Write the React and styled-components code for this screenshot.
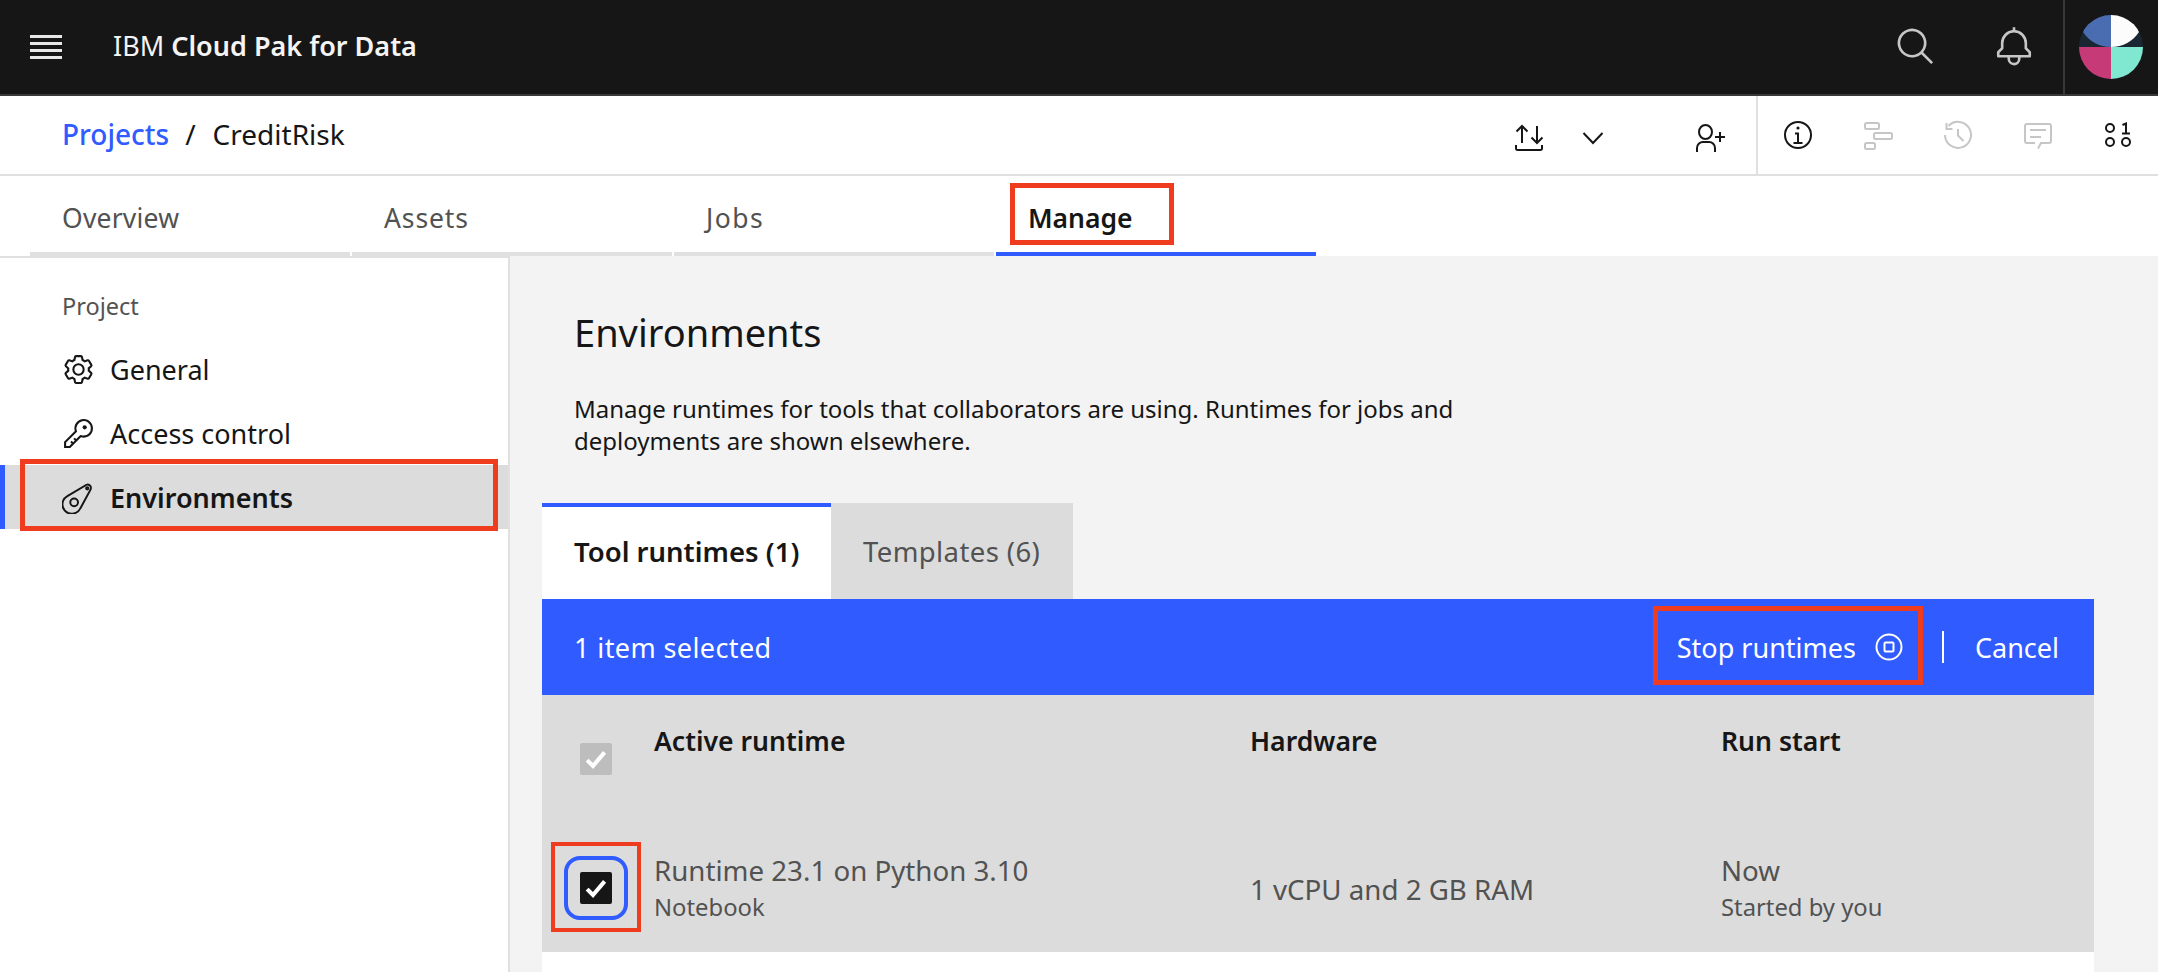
import React from 'react';
import styled, { createGlobalStyle } from 'styled-components';

const FONT = '"Noto Sans", "Open Sans", Arial, sans-serif';

const Global = createGlobalStyle`
  html, body { margin: 0; padding: 0; height: 100%; background: #fff; }
  body { font-family: ${FONT}; color: #161616; overflow: hidden; }
  #root { height: 100%; }
  * { box-sizing: border-box; }
`;

const Page = styled.div`
  width: 2158px; height: 972px; display: flex; flex-direction: column; overflow: hidden;
`;

/* top bar */
const TopBar = styled.header`
  height: 96px; flex: none; background: #161616; border-bottom: 2px solid #393939;
  display: flex; align-items: center; color: #f4f4f4;
`;
const Burger = styled.div`
  width: 32px; height: 24px; margin-left: 30px; display: flex; flex-direction: column; justify-content: space-between;
  & > i { display: block; height: 3px; background: #e8e8e8; }
`;
const Brand = styled.div`
  margin-left: 51px; font-size: 27px; letter-spacing: 0; line-height: 32px; white-space: nowrap; margin-top: -2px;
  & > b { font-weight: 600; }
`;
const TopIcons = styled.div`
  margin-left: auto; display: flex; align-items: center; height: 100%;
`;
const TopIconSlot = styled.div`
  width: 98px; height: 100%; display: flex; align-items: center; justify-content: center; color: #c6c6c6;
  svg { width: 42px; height: 42px; }
`;
const AvatarSlot = styled.div`
  width: 95px; height: 100%; margin-left: 0; border-left: 2px solid #393939;
  display: flex; align-items: center; padding-left: 14px;
  svg { width: 64px; height: 64px; display: block; }
`;

/* breadcrumb row */
const Crumbs = styled.div`
  height: 80px; flex: none; border-bottom: 2px solid #e0e0e0; display: flex; align-items: stretch; padding-left: 62px;
`;
const CrumbText = styled.div`
  display: flex; align-items: center; font-size: 28px; white-space: nowrap; margin-top: -2px;
`;
const CrumbLink = styled.span` color: #2f5bff; font-weight: 500; `;
const CrumbSep = styled.span` margin: 0 17px 0 16px; `;
const ToolSet = styled.div` margin-left: auto; display: flex; align-items: center; `;
const ToolButton = styled.div`
  width: ${p => p.$w || 80}px; height: 78px; display: flex; align-items: center; justify-content: center;
  margin-right: ${p => p.$gap || 0}px;
  color: ${p => p.$off ? '#c6c6c6' : '#161616'};
  svg { width: 32px; height: 32px; overflow: visible; }
`;
const ToolDivider = styled.div` width: 2px; height: 78px; background: #e0e0e0; `;

/* tabs */
const TabRow = styled.nav`
  height: 80px; flex: none; display: flex; gap: 2px; padding-left: 30px;
`;
const PageTab = styled.div`
  position: relative; width: 320px; height: 80px; border-bottom: 4px solid ${p => p.$active ? '#2f5bff' : '#e0e0e0'};
  padding: 24px 0 0 32px; font-size: 26.5px; line-height: 36px; letter-spacing: ${p => p.$ls || 0}px;
  color: ${p => p.$active ? '#161616' : '#525252'}; font-weight: ${p => p.$active ? 600 : 400};
`;

/* annotation boxes */
const Callout = styled.div`
  position: absolute; border: 5px solid #f03c1e; pointer-events: none;
`;
const ManageCallout = styled(Callout)` left: 14px; top: 7px; width: 164px; height: 62px; `;
const NavCallout = styled(Callout)` left: 15px; top: -6px; width: 478px; height: 72px; `;
const StopCallout = styled(Callout)` right: 171px; top: 7px; width: 270px; height: 79px; `;
const CheckCallout = styled(Callout)` left: -17px; top: -18px; width: 90px; height: 90px; border-width: 4px; `;

/* body */
const Body = styled.div` flex: 1; display: flex; min-height: 0; `;
const Side = styled.aside`
  width: 510px; flex: none; border-right: 2px solid #e0e0e0; border-top: 2px solid #e0e0e0; background: #fff; padding-top: 31px;
`;
const SideTitle = styled.div`
  padding-left: 62px; font-size: 23.5px; line-height: 34px; color: #525252; margin-bottom: 14px;
`;
const NavItem = styled.div`
  position: relative; height: 64px; display: flex; align-items: center; gap: 15px; padding-left: ${p => p.$active ? 57 : 62}px;
  background: ${p => p.$active ? '#dcdcdc' : 'transparent'}; border-left: ${p => p.$active ? '5px solid #2f5bff' : '0'};
  font-size: 27px; font-weight: ${p => p.$active ? 600 : 400};
  svg { width: 33px; height: 33px; flex: none; }
`;

const Main = styled.main`
  flex: 1; min-width: 0; background: #f3f3f3; padding: 58px 64px 0 32px; display: flex; flex-direction: column;
`;
const Title = styled.h1`
  margin: 0 0 43px 32px; font-size: 38px; font-weight: 400; line-height: 36px;
`;
const Lead = styled.p`
  margin: 0 0 47px 32px; width: 900px; font-size: 24px; line-height: 31.5px;
`;
const SubTabs = styled.div` display: flex; height: 96px; flex: none; `;
const SubTab = styled.div`
  width: ${p => p.$w}px; height: 96px; padding-left: 32px; padding-top: ${p => p.$active ? 27 : 31}px;
  background: ${p => p.$active ? '#fff' : '#dcdcdc'}; border-top: ${p => p.$active ? '4px solid #2f5bff' : '0'};
  font-size: 27.5px; line-height: 36px; font-weight: ${p => p.$active ? 600 : 400}; color: ${p => p.$active ? '#161616' : '#525252'};
  white-space: nowrap; letter-spacing: ${p => p.$ls || 0}px;
`;
const TablePanel = styled.section` flex: 1; background: #fff; `;
const ActionBar = styled.div`
  position: relative; height: 96px; background: #2f5bff; color: #fff; display: flex; align-items: center;
  padding: 0 35px 0 32px; font-size: 27px; white-space: nowrap;
`;
const ActionLabel = styled.div` margin-right: auto; letter-spacing: 0.4px; `;
const StopAction = styled.div`
  display: flex; align-items: center; gap: 19px;
  svg { width: 28px; height: 28px; display: block; }
`;
const BarDivider = styled.div` width: 2px; height: 32px; background: #fff; margin: 0 31px 0 39px; `;

const Row = styled.div`
  display: grid; grid-template-columns: 112px 596px 471px 1fr; background: #dcdcdc; height: ${p => p.$h}px;
`;
const CheckCell = styled.div`
  display: flex; align-items: ${p => p.$top ? 'flex-start' : 'center'}; padding-left: 38px; padding-top: ${p => p.$top ? 48 : 0}px;
`;
const HeadCell = styled.div`
  padding-top: 28px; font-size: 26.6px; line-height: 36px; font-weight: 600;
`;
const DataCell = styled.div`
  display: flex; flex-direction: column; justify-content: center; color: #525252; white-space: nowrap; padding-top: 2px;
`;
const DataMain = styled.div` font-size: 27.7px; line-height: 36px; `;
const DataSub = styled.div` font-size: 23.8px; line-height: 36px; margin-top: 1px; `;
const CheckBox = styled.div`
  width: 32px; height: 32px; border-radius: 2px; display: flex; align-items: center; justify-content: center;
  background: ${p => p.$dim ? '#bdbdbd' : '#161616'};
  svg { width: 30px; height: 30px; }
`;
const FocusRing = styled.div`
  position: relative; width: 64px; height: 64px; margin-left: -16px; border: 4px solid #2f5bff; border-radius: 16px;
  display: flex; align-items: center; justify-content: center;
`;

const Check = () => (
  <svg viewBox="0 0 22 22"><path d="M4.5 11.8l4.3 4.3 8.5-10" fill="none" stroke="#fff" strokeWidth="3" /></svg>
);

const I = {
  search: <svg viewBox="0 0 32 32" fill="currentColor"><path d="M29 27.5859l-7.5521-7.5521a11.0177 11.0177 0 1 0-1.4141 1.4141L27.5859 29ZM4 13a9 9 0 1 1 9 9A9.01 9.01 0 0 1 4 13Z" /></svg>,
  bell: <svg viewBox="0 0 32 32" fill="currentColor"><path d="M28.7071,19.293,26,16.5859V13a10.0136,10.0136,0,0,0-9-9.9492V1H15V3.0508A10.0136,10.0136,0,0,0,6,13v3.5859L3.2929,19.293A1,1,0,0,0,3,20v3a1,1,0,0,0,1,1h7v.7768a5.152,5.152,0,0,0,4.5,5.1987A5.0057,5.0057,0,0,0,21,25V24h7a1,1,0,0,0,1-1V20A1,1,0,0,0,28.7071,19.293ZM19,25a3,3,0,0,1-6,0V24h6Zm8-3H5V20.4141L7.707,17.707A1,1,0,0,0,8,17V13a8,8,0,0,1,16,0v4a1,1,0,0,0,.293.707L27,20.4141Z" /></svg>,
  transfer: <svg viewBox="0 0 32 32" fill="none" stroke="currentColor" strokeWidth="2"><path d="M3 26v3.5a1.5 1.5 0 0 0 1.5 1.5h23a1.5 1.5 0 0 0 1.5-1.5V26M9 24V7M3.5 12.5L9 7l5.5 5.5M24 7v17M18.5 18.5L24 24l5.5-5.5" /></svg>,
  chevron: <svg viewBox="0 0 32 32" fill="none" stroke="currentColor" strokeWidth="2"><path d="M6.5 14L16 24l9.5-10" /></svg>,
  addUser: <svg viewBox="0 0 32 32" fill="none" stroke="currentColor" strokeWidth="2"><ellipse cx="12.5" cy="13" rx="6.5" ry="7" /><path d="M4 33v-4a6 6 0 0 1 6-6h6a6 6 0 0 1 6 6v4M22 18h10M27 13v10" /></svg>,
  info: <svg viewBox="0 0 32 32" fill="none" stroke="currentColor" strokeWidth="2"><circle cx="16" cy="16" r="13" /><path d="M11.5 24h9M16 24v-9.5h-3" /><circle cx="16" cy="9" r="1.6" fill="currentColor" stroke="none" /></svg>,
  flow: <svg viewBox="0 0 32 32" fill="none" stroke="currentColor" strokeWidth="2"><rect x="3" y="4" width="14" height="6" rx="1.5" /><rect x="12" y="14" width="18" height="6" rx="1.5" /><rect x="3" y="24" width="10" height="6" rx="1.5" /></svg>,
  history: <svg viewBox="0 0 32 32" fill="none" stroke="currentColor" strokeWidth="2"><path d="M6.5 7A13 13 0 1 1 3 16M4.5 4v6h6M16 10v6.5l5.5 5.5" /></svg>,
  comment: <svg viewBox="0 0 32 32" fill="none" stroke="currentColor" strokeWidth="2"><path d="M16 29.5l3-5.5h8a2 2 0 0 0 2-2V7a2 2 0 0 0-2-2H5a2 2 0 0 0-2 2v15a2 2 0 0 0 2 2h8" /><path d="M8 11h16M8 18h11" /></svg>,
  binary: <svg viewBox="0 0 32 32" fill="none" stroke="currentColor" strokeWidth="2"><circle cx="8" cy="9" r="4" /><path d="M20.5 6L24 4.5V14.5M20 14.5h8" /><circle cx="8" cy="23" r="4" /><circle cx="24" cy="23" r="4" /></svg>,
  gear: <svg viewBox="0 0 32 32" fill="currentColor"><path d="M27,16.76c0-.25,0-.5,0-.76s0-.51,0-.77l1.92-1.68A2,2,0,0,0,29.3,11L26.94,7a2,2,0,0,0-1.73-1,2,2,0,0,0-.64.1l-2.43.82a11.35,11.35,0,0,0-1.31-.75l-.51-2.52a2,2,0,0,0-2-1.61H13.64a2,2,0,0,0-2,1.61l-.51,2.52a11.48,11.48,0,0,0-1.32.75L7.43,6.06A2,2,0,0,0,6.79,6,2,2,0,0,0,5.06,7L2.7,11a2,2,0,0,0,.41,2.51L5,15.24c0,.25,0,.5,0,.76s0,.51,0,.77L3.11,18.45A2,2,0,0,0,2.7,21L5.06,25a2,2,0,0,0,1.73,1,2,2,0,0,0,.64-.1l2.43-.82a11.35,11.35,0,0,0,1.31.75l.51,2.52a2,2,0,0,0,2,1.61h4.72a2,2,0,0,0,2-1.61l.51-2.52a11.48,11.48,0,0,0,1.32-.75l2.42.82a2,2,0,0,0,.64.1,2,2,0,0,0,1.73-1L29.3,21a2,2,0,0,0-.41-2.51ZM25.21,24l-3.43-1.16a8.86,8.86,0,0,1-2.71,1.57L18.36,28H13.64l-.71-3.55a9.36,9.36,0,0,1-2.7-1.57L6.79,24,4.43,20l2.72-2.4a8.9,8.9,0,0,1,0-3.13L4.43,12,6.79,8l3.43,1.16a8.86,8.86,0,0,1,2.71-1.57L13.64,4h4.72l.71,3.55a9.36,9.36,0,0,1,2.7,1.57L25.21,8,27.57,12l-2.72,2.4a8.9,8.9,0,0,1,0,3.13L27.57,20Z" /><path d="M16,22a6,6,0,1,1,6-6A5.94,5.94,0,0,1,16,22Zm0-10a3.91,3.91,0,0,0-4,4,3.91,3.91,0,0,0,4,4,3.91,3.91,0,0,0,4-4A3.91,3.91,0,0,0,16,12Z" /></svg>,
  key: <svg viewBox="0 0 32 32" fill="currentColor"><path d="M21,2a8.9977,8.9977,0,0,0-8.6119,11.6118L2,24v6H8L18.3881,19.6118A9,9,0,1,0,21,2Zm0,16a7.0125,7.0125,0,0,1-2.0322-.3022L17.821,17.35l-.8472.8472-3.1811,3.1812L12.4141,20,11,21.4141l1.3787,1.3786-1.5859,1.5859L9.4141,23,8,24.4141l1.3787,1.3786L7.1716,28H4V24.8284l9.8023-9.8023.8472-.8474-.3473-1.1467A7,7,0,1,1,21,18Z" /><circle cx="22" cy="10" r="2" /></svg>,
  env: <svg viewBox="-1 -1 34 34" fill="none" stroke="currentColor" strokeWidth="2"><path d="M4.5 14.5L22.5 4a3.5 3.5 0 0 1 5.5 4.5L18 27A9.7 9.7 0 1 1 4.5 14.5Z" /><circle cx="11.5" cy="21" r="4" /><circle cx="25" cy="6.5" r="1.2" /></svg>,
  stop: <svg viewBox="0 0 28 28" fill="none" stroke="#fff" strokeWidth="2"><circle cx="14" cy="14" r="12.5" /><rect x="9.5" y="9.5" width="9" height="9" rx="1" /></svg>,
};

const Avatar = () => (
  <svg viewBox="0 0 64 64">
    <defs><clipPath id="av"><circle cx="32" cy="32" r="32" /></clipPath></defs>
    <g clipPath="url(#av)">
      <rect width="64" height="64" fill="#1a2733" />
      <path d="M32 0H24C14 0 6 10 4 17c6 9 16 15 28 15Z" fill="#4a6db2" />
      <path d="M32 0h8c10 0 18 10 20 17-6 9-16 15-28 15Z" fill="#fcfcfc" />
      <rect x="0" y="32" width="32" height="32" fill="#c63a77" />
      <rect x="32" y="32" width="32" height="32" fill="#80e8d0" />
    </g>
  </svg>
);

export default function App() {
  return (
    <Page>
      <Global />
      <TopBar>
        <Burger><i /><i /><i /><i /></Burger>
        <Brand>IBM <b>Cloud Pak for Data</b></Brand>
        <TopIcons>
          <TopIconSlot>{I.search}</TopIconSlot>
          <TopIconSlot>{I.bell}</TopIconSlot>
          <AvatarSlot><Avatar /></AvatarSlot>
        </TopIcons>
      </TopBar>

      <Crumbs>
        <CrumbText>
          <CrumbLink>Projects</CrumbLink>
          <CrumbSep>/</CrumbSep>
          <span>CreditRisk</span>
        </CrumbText>
        <ToolSet>
          <ToolButton>{I.transfer}</ToolButton>
          <ToolButton $w={48} $gap={45}>{I.chevron}</ToolButton>
          <ToolButton $w={94}>{I.addUser}</ToolButton>
          <ToolDivider />
          <ToolButton>{I.info}</ToolButton>
          <ToolButton $off>{I.flow}</ToolButton>
          <ToolButton $off>{I.history}</ToolButton>
          <ToolButton $off>{I.comment}</ToolButton>
          <ToolButton>{I.binary}</ToolButton>
        </ToolSet>
      </Crumbs>

      <TabRow>
        <PageTab $ls={0.2}>Overview</PageTab>
        <PageTab $ls={0.9}>Assets</PageTab>
        <PageTab $ls={1.5}>Jobs</PageTab>
        <PageTab $active>Manage<ManageCallout /></PageTab>
      </TabRow>

      <Body>
        <Side>
          <SideTitle>Project</SideTitle>
          <NavItem>{I.gear}General</NavItem>
          <NavItem>{I.key}Access control</NavItem>
          <NavItem $active>{I.env}Environments<NavCallout /></NavItem>
        </Side>
        <Main>
          <Title>Environments</Title>
          <Lead>Manage runtimes for tools that collaborators are using. Runtimes for jobs and deployments are shown elsewhere.</Lead>
          <SubTabs>
            <SubTab $active $w={289}>Tool runtimes (1)</SubTab>
            <SubTab $w={242} $ls={0.4}>Templates (6)</SubTab>
          </SubTabs>
          <TablePanel>
            <ActionBar>
              <ActionLabel>1 item selected</ActionLabel>
              <StopAction>Stop runtimes {I.stop}</StopAction>
              <StopCallout />
              <BarDivider />
              <span>Cancel</span>
            </ActionBar>
            <Row $h={128}>
              <CheckCell $top><CheckBox $dim><Check /></CheckBox></CheckCell>
              <HeadCell>Active runtime</HeadCell>
              <HeadCell>Hardware</HeadCell>
              <HeadCell>Run start</HeadCell>
            </Row>
            <Row $h={129}>
              <CheckCell>
                <FocusRing>
                  <CheckBox><Check /></CheckBox>
                  <CheckCallout />
                </FocusRing>
              </CheckCell>
              <DataCell>
                <DataMain>Runtime 23.1 on Python 3.10</DataMain>
                <DataSub>Notebook</DataSub>
              </DataCell>
              <DataCell><DataMain>1 vCPU and 2 GB RAM</DataMain></DataCell>
              <DataCell>
                <DataMain>Now</DataMain>
                <DataSub>Started by you</DataSub>
              </DataCell>
            </Row>
          </TablePanel>
        </Main>
      </Body>
    </Page>
  );
}
